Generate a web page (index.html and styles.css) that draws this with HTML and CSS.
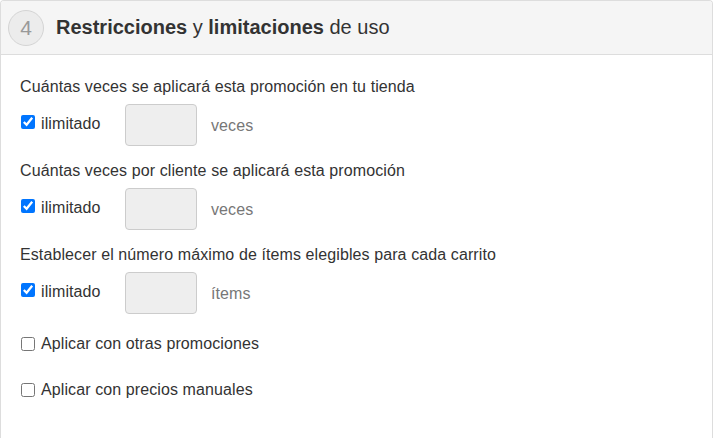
FILE: index.html
```html
<!DOCTYPE html>
<html lang="es">
<head>
<meta charset="utf-8">
<title>Restricciones y limitaciones de uso</title>
<link rel="stylesheet" href="styles.css">
</head>
<body>
<section class="panel">
  <header class="panel-heading">
    <span class="step">4</span>
    <h2 class="title"><b>Restricciones</b> y <b>limitaciones</b> de uso</h2>
  </header>
  <div class="panel-body">
    <div class="group">
      <p class="label">Cuántas veces se aplicará esta promoción en tu tienda</p>
      <div class="row">
        <label class="check"><input type="checkbox" checked> ilimitado</label>
        <input class="field" type="text" disabled>
        <span class="unit">veces</span>
      </div>
    </div>
    <div class="group">
      <p class="label">Cuántas veces por cliente se aplicará esta promoción</p>
      <div class="row">
        <label class="check"><input type="checkbox" checked> ilimitado</label>
        <input class="field" type="text" disabled>
        <span class="unit">veces</span>
      </div>
    </div>
    <div class="group">
      <p class="label">Establecer el número máximo de ítems elegibles para cada carrito</p>
      <div class="row">
        <label class="check"><input type="checkbox" checked> ilimitado</label>
        <input class="field" type="text" disabled>
        <span class="unit">ítems</span>
      </div>
    </div>
    <label class="option"><input type="checkbox"> Aplicar con otras promociones</label>
    <label class="option"><input type="checkbox"> Aplicar con precios manuales</label>
  </div>
</section>
</body>
</html>
```
FILE: styles.css
```css
html, body {
  margin: 0;
  padding: 0;
  background: #fff;
}
body {
  font-family: "Liberation Sans", Arial, sans-serif;
  font-size: 16px;
  letter-spacing: 0.1px;
  color: #333;
}
.panel {
  width: 713px;
  height: 438px;
  box-sizing: border-box;
  border: 1px solid #ddd;
  border-bottom: none;
  border-radius: 4px 4px 0 0;
  overflow: hidden;
}
.panel-heading {
  display: flex;
  align-items: center;
  height: 54px;
  box-sizing: border-box;
  padding-left: 7px;
  background: #f5f5f5;
  border-bottom: 1px solid #ddd;
}
.step {
  width: 36px;
  height: 36px;
  box-sizing: border-box;
  border: 1px solid #d4d4d4;
  border-radius: 50%;
  background: #ececec;
  color: #999;
  font-size: 21px;
  letter-spacing: 0;
  display: flex;
  align-items: center;
  justify-content: center;
  margin-right: 12px;
}
.title {
  margin: 0;
  font-size: 20px;
  font-weight: normal;
  letter-spacing: 0;
  color: #333;
}
.title b { font-weight: bold; }
.panel-body {
  padding: 22px 19px 0;
}
.group { margin-bottom: 15px; }
.label {
  margin: 0 0 7px;
  line-height: 20px;
}
.row {
  display: flex;
  align-items: center;
  height: 42px;
}
.check {
  display: flex;
  align-items: center;
  width: 105px;
  margin-top: -3px;
}
.check input, .option input {
  width: 14px;
  height: 14px;
  margin: 0 6px 0 1px;
}
.check input { position: relative; top: -2px; }
.field {
  width: 72px;
  height: 42px;
  box-sizing: border-box;
  border: 1px solid #ccc;
  border-radius: 4px;
  background: #eee;
  margin: 0;
}
.unit {
  color: #777;
  margin-left: 14px;
  margin-top: 1px;
}
.option {
  display: flex;
  align-items: center;
  line-height: 20px;
  margin: 0 0 26px;
}
.group + .option { margin-top: 20px; }
```
